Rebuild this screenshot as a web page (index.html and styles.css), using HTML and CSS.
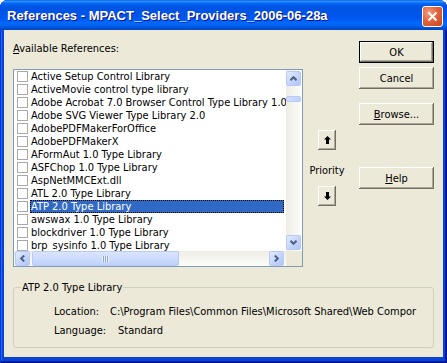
FILE: index.html
```html
<!DOCTYPE html>
<html lang="en">
  <head>
    <meta charset="UTF-8" />
    <title>References - MPACT_Select_Providers_2006-06-28a</title>
    <link rel="stylesheet" href="styles.css">
  </head>
  <body>
    <div class="window">
      <div class="title-bar">
        <span class="title-text">References - MPACT_Select_Providers_2006-06-28a</span>
        <button class="close-btn" aria-label="Close">
          <svg width="11" height="11" viewBox="0 0 11 11">
            <path d="M1.5 1.5 L9.5 9.5 M9.5 1.5 L1.5 9.5" stroke="#fff" stroke-width="2" />
          </svg>
        </button>
      </div>

      <div class="client">
        <div class="top-area">
          <div class="refs">
            <div class="refs-label"><u>A</u>vailable References:</div>
            <div class="listbox">
              <ul class="items">
                <li><span class="check"></span><span class="item-text">Active Setup Control Library</span></li>
                <li><span class="check"></span><span class="item-text">ActiveMovie control type library</span></li>
                <li><span class="check"></span><span class="item-text">Adobe Acrobat 7.0 Browser Control Type Library 1.0</span></li>
                <li><span class="check"></span><span class="item-text">Adobe SVG Viewer Type Library 2.0</span></li>
                <li><span class="check"></span><span class="item-text">AdobePDFMakerForOffice</span></li>
                <li><span class="check"></span><span class="item-text">AdobePDFMakerX</span></li>
                <li><span class="check"></span><span class="item-text">AFormAut 1.0 Type Library</span></li>
                <li><span class="check"></span><span class="item-text">ASFChop 1.0 Type Library</span></li>
                <li><span class="check"></span><span class="item-text">AspNetMMCExt.dll</span></li>
                <li><span class="check"></span><span class="item-text">ATL 2.0 Type Library</span></li>
                <li class="selected"><span class="check"></span><span class="item-text">ATP 2.0 Type Library</span></li>
                <li><span class="check"></span><span class="item-text">awswax 1.0 Type Library</span></li>
                <li><span class="check"></span><span class="item-text">blockdriver 1.0 Type Library</span></li>
                <li><span class="check"></span><span class="item-text">brp_sysinfo 1.0 Type Library</span></li>
              </ul>

              <div class="vscroll">
                <span class="sb-btn">
                  <svg width="7" height="5" viewBox="0 0 7 5"><path d="M0.5 4.2 L3.5 1.2 L6.5 4.2" fill="none" stroke="#4d6185" stroke-width="2" /></svg>
                </span>
                <span class="vthumb"></span>
                <span class="sb-fill"></span>
                <span class="sb-btn">
                  <svg width="7" height="5" viewBox="0 0 7 5"><path d="M0.5 0.8 L3.5 3.8 L6.5 0.8" fill="none" stroke="#4d6185" stroke-width="2" /></svg>
                </span>
              </div>

              <div class="hscroll">
                <span class="sb-btn">
                  <svg width="5" height="7" viewBox="0 0 5 7"><path d="M4.2 0.5 L1.2 3.5 L4.2 6.5" fill="none" stroke="#4d6185" stroke-width="2" /></svg>
                </span>
                <span class="hthumb"><span class="grip"></span></span>
                <span class="sb-fill"></span>
                <span class="sb-btn">
                  <svg width="5" height="7" viewBox="0 0 5 7"><path d="M0.8 0.5 L3.8 3.5 L0.8 6.5" fill="none" stroke="#4d6185" stroke-width="2" /></svg>
                </span>
              </div>
              <div class="corner"></div>
            </div>
          </div>

          <div class="priority">
            <button class="btn arrow-btn" aria-label="Move up">
              <svg width="7" height="8" viewBox="0 0 7 8"><path d="M3.5 0 L7 3.5 L5 3.5 L5 8 L2 8 L2 3.5 L0 3.5 Z" fill="#000" /></svg>
            </button>
            <div class="priority-label">Priority</div>
            <button class="btn arrow-btn" aria-label="Move down">
              <svg width="7" height="8" viewBox="0 0 7 8"><path d="M3.5 8 L7 4.5 L5 4.5 L5 0 L2 0 L2 4.5 L0 4.5 Z" fill="#000" /></svg>
            </button>
          </div>

          <div class="actions">
            <button class="btn default">OK</button>
            <button class="btn cancel">Cancel</button>
            <button class="btn browse"><u>B</u>rowse...</button>
            <button class="btn help"><u>H</u>elp</button>
          </div>
        </div>

        <fieldset class="details">
          <legend>ATP 2.0 Type Library</legend>
          <div class="detail-row">
            <span class="detail-label">Location:</span>
            <span class="detail-value">C:\Program Files\Common Files\Microsoft Shared\Web Compor</span>
          </div>
          <div class="detail-row">
            <span class="detail-label">Language:</span>
            <span class="detail-value lang">Standard</span>
          </div>
        </fieldset>
      </div>
    </div>
  </body>
</html>
```

FILE: styles.css
```css
* {
  margin: 0;
  padding: 0;
  box-sizing: border-box;
}

body {
  background: #fff;
  font-family: "DejaVu Sans Condensed", "DejaVu Sans", sans-serif;
  font-size: 11px;
  color: #000;
}

.window {
  width: 447px;
  height: 363px;
  display: flex;
  flex-direction: column;
  padding: 0 4px 6px;
  background: #0843d8;
  border-radius: 8px 8px 0 0;
  box-shadow: inset 1px 0 #0831d9, inset -1px -1px #00138c, inset -2px -2px #001ea0, inset 2px 0 #166aee;
}

/* title bar */
.title-bar {
  height: 30px;
  margin: 0 -4px;
  padding: 0 4px 0 7px;
  display: flex;
  align-items: center;
  justify-content: space-between;
  border-radius: 8px 8px 0 0;
  background: linear-gradient(to bottom, #0058ee 0%, #3593ff 4%, #288eff 6%, #127dff 8%, #036ffc 10%, #0262ee 14%, #0057e5 20%, #0054e3 24%, #0055eb 56%, #005bf5 66%, #026afe 76%, #0062ef 86%, #0052d6 92%, #0046c6 100%);
}

.title-text {
  color: #fff;
  font-family: "Liberation Sans", Arial, sans-serif;
  font-weight: bold;
  font-size: 13px;
  text-shadow: 1px 1px #0f1089;
  padding-top: 1px;
}

.close-btn {
  width: 21px;
  height: 21px;
  margin-top: 2px;
  border: 1px solid #fff;
  border-radius: 3px;
  background: radial-gradient(circle at 30% 30%, #f29b7f 0%, #e2633d 45%, #c8431a 100%);
  display: flex;
  align-items: center;
  justify-content: center;
}

/* client area */
.client {
  flex: 1;
  background: #ece9d8;
  padding: 11px 9px 0;
}

.top-area {
  display: flex;
}

.refs {
  width: 290px;
}

.refs-label {
  margin-top: 1px;
  line-height: 13px;
}

.listbox {
  margin-top: 14px;
  height: 198px;
  border: 1px solid #7f9db9;
  background: #fff;
  display: grid;
  grid-template-columns: 272px 16px;
  grid-template-rows: 181px 15px;
}

.items {
  list-style: none;
  overflow: hidden;
}

.items li {
  height: 13px;
  display: flex;
  align-items: center;
  padding-left: 3px;
  white-space: nowrap;
}

.check {
  flex: none;
  width: 11px;
  height: 11px;
  border: 1px solid #a9a9a9;
  background: #fff;
}

.item-text {
  flex: 1;
  margin-left: 2px;
  margin-right: 2px;
  padding: 0 1px;
  line-height: 13px;
  height: 13px;
}

.items li.selected .item-text {
  background: #316ac5;
  color: #fff;
  outline: 1px dotted #000;
  outline-offset: -1px;
}

/* scrollbars */
.vscroll {
  display: flex;
  flex-direction: column;
  padding: 1px 1px 1px 0;
  background: linear-gradient(to right, #eeede5, #fdfdfa);
}

.hscroll {
  display: flex;
  padding: 0 2px 0 1px;
  background: linear-gradient(to bottom, #eeede5, #fdfdfa);
}

.corner {
  background: #ece9d8;
}

.sb-btn {
  width: 15px;
  height: 15px;
  flex: none;
  display: flex;
  align-items: center;
  justify-content: center;
  border: 1px solid #b8cbf6;
  border-radius: 2px;
  background: linear-gradient(135deg, #e3ebfe 0%, #c6d6fc 50%, #b2c6f6 100%);
}

.sb-fill {
  flex: 1;
}

.vthumb {
  margin-top: 10px;
  height: 6px;
  width: 15px;
  border: 1px solid #b8cbf6;
  border-radius: 2px;
  background: linear-gradient(to right, #d4e0fd, #c0d1fb);
}

.hthumb {
  margin-left: 2px;
  width: 147px;
  height: 15px;
  border: 1px solid #b8cbf6;
  border-radius: 2px;
  background: linear-gradient(to bottom, #d9e4fe, #c0d1fb);
  display: flex;
  align-items: center;
  justify-content: center;
}

.grip {
  width: 7px;
  height: 6px;
  background: repeating-linear-gradient(to right, #eef3fe 0 1px, #8ca6e2 1px 2px);
}

/* priority */
.priority {
  margin-left: 7px;
  width: 34px;
  display: flex;
  flex-direction: column;
  align-items: center;
  padding-top: 89px;
}

.priority-label {
  margin-top: 14px;
  line-height: 14px;
}

.priority-label + .arrow-btn {
  margin-top: 8px;
}

/* buttons */
.btn {
  font-family: "DejaVu Sans Condensed", "DejaVu Sans", sans-serif;
  font-size: 11px;
  color: #000;
  background: #ece9d8;
  border: none;
  box-shadow: inset -1px -1px #716f64, inset 1px 1px #fff, inset -2px -2px #aca899;
  display: flex;
  align-items: center;
  justify-content: center;
}

.arrow-btn {
  width: 18px;
  height: 20px;
}

.actions {
  margin-left: 15px;
  width: 75px;
  display: flex;
  flex-direction: column;
}

.actions .btn {
  width: 75px;
  height: 22px;
}

.btn.default {
  box-shadow: inset 0 0 0 1px #000, inset -2px -2px #716f64, inset 2px 2px #fff, inset -3px -3px #aca899;
}

.btn.cancel {
  margin-top: 4px;
}

.btn.browse {
  margin-top: 14px;
}

.btn.help {
  margin-top: 42px;
}

/* details group */
.details {
  margin-top: 14px;
  border: 1px solid #d0d0bf;
  border-radius: 3px;
  padding: 8px 0 7px 7px;
}

.details legend {
  padding: 0 1px;
  line-height: 13px;
}

.detail-row {
  height: 19px;
  display: flex;
  align-items: center;
  margin-left: 33px;
}

.detail-label {
  width: 56px;
  flex: none;
}

.detail-value {
  white-space: nowrap;
}

.detail-value.lang {
  padding-left: 8px;
}
```
